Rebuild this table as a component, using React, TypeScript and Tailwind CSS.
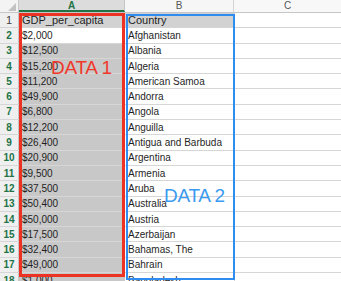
const gdp = [
  "$2,000", "$12,500", "$15,200", "$11,200", "$49,900", "$6,800", "$12,200", "$26,400",
  "$20,900", "$9,500", "$37,500", "$50,400", "$50,000", "$17,500", "$32,400", "$49,000", "$1,000",
];

const countries = [
  "Afghanistan", "Albania", "Algeria", "American Samoa", "Andorra", "Angola", "Anguilla",
  "Antigua and Barbuda", "Argentina", "Armenia", "Aruba", "Australia", "Austria", "Azerbaijan",
  "Bahamas, The", "Bahrain", "Bangladesh",
];

export default function App() {
  return (
    <div
      className="relative h-[281px] w-[341px] overflow-hidden bg-white text-[10px] text-[#1f1f1f]"
      style={{ fontFamily: '"Liberation Sans", Arial, sans-serif' }}
    >
      {/* column headers */}
      <div className="flex h-[13px] border-b border-[#c6c6c6] bg-[#f3f3f3] text-[10px] leading-[12px]">
        <div className="relative w-[19px] border-r border-[#c6c6c6]">
          <div className="absolute bottom-[1px] right-[2px] h-0 w-0 border-b-[8px] border-l-[8px] border-b-[#c2c2c2] border-l-transparent" />
        </div>
        <div className="flex w-[106px] justify-center border-r border-[#c6c6c6] border-b-2 border-b-[#217346] bg-[#dcdcdc] font-bold text-[#217346]">
          A
        </div>
        <div className="flex w-[109px] justify-center border-r border-[#d4d4d4] bg-[#f6f6f6] text-[#555]">B</div>
        <div className="flex flex-1 justify-center bg-[#f8f8f8] text-[#555]">C</div>
      </div>

      {/* row 1 */}
      <div className="flex h-[15.3px] items-center border-b border-[#d4d4d4]">
        <div className="flex h-full w-[19px] items-center justify-center border-r border-[#c6c6c6] bg-[#efefef] text-[11px] text-[#444]">
          1
        </div>
        <div className="flex h-full w-[106px] items-center bg-[#d2d2d2] pl-[3px] text-[11px]">GDP_per_capita</div>
        <div className="flex h-full w-[109px] items-center bg-[#d2d2d2] pl-[3px] text-[11px]">Country</div>
        <div className="h-full flex-1 border-l border-[#d4d4d4]" />
      </div>

      {gdp.map((v, i) => {
        const active = i === 0;
        return (
          <div key={i} className="flex h-[15.3px] items-center border-b border-[#d6d6d6]">
            <div className="flex h-full w-[19px] items-center justify-center border-r border-[#c6c6c6] bg-[#efefef] text-[10px] font-bold text-[#217346]">
              {i + 2}
            </div>
            <div
              className={
                active
                  ? "flex h-full w-[106px] items-center bg-white pl-[3px]"
                  : "flex h-full w-[106px] items-center bg-[#c8c8c8] pl-[3px]"
              }
            >
              {v}
            </div>
            <div className="flex h-full w-[109px] items-center pl-[3px]">{countries[i]}</div>
            <div className="h-full flex-1 border-l border-[#d4d4d4]" />
          </div>
        );
      })}

      {/* highlight boxes */}
      <div className="absolute left-[19px] top-[13px] h-[264px] w-[106px] border-[3px] border-[#ec3323]" />
      <div className="absolute left-[126px] top-[14px] h-[266px] w-[109px] border-2 border-[#2f8df2]" />

      <div className="absolute left-[51px] top-[54px] text-[19px] tracking-[-0.3px] text-[#f0382b]">DATA 1</div>
      <div className="absolute left-[164px] top-[182px] text-[19px] tracking-[-0.3px] text-[#3a9af0]">DATA 2</div>
    </div>
  );
}
